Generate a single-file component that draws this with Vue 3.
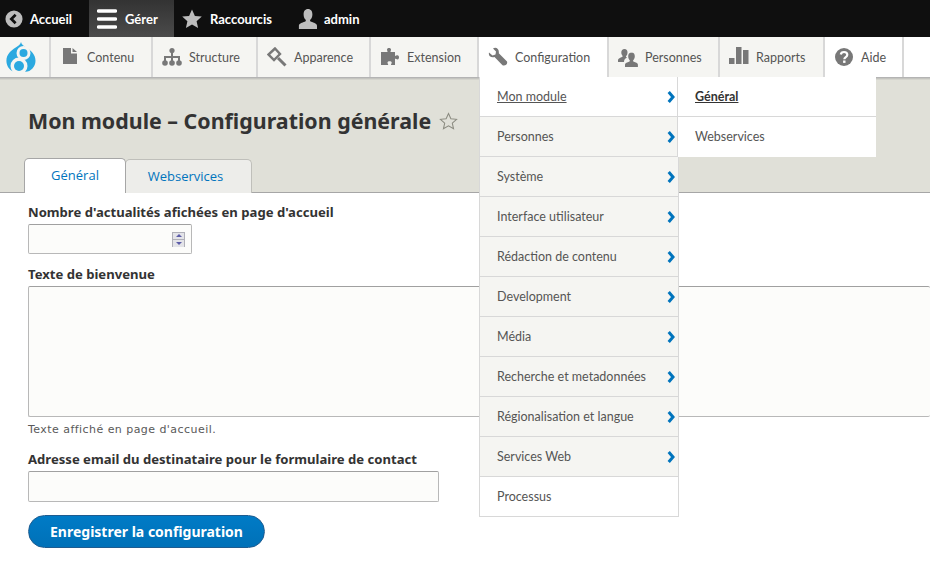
<template>
  <div class="page">
    <div class="bar">
      <a class="bar-item">
        <svg class="bar-icon" viewBox="0 0 20 20" width="18" height="18"><circle cx="10" cy="10" r="9.500" fill="#bdbdbd" /><path d="M11.800 5.200 7 10l4.800 4.800" fill="none" stroke="#0f0f0f" stroke-width="3" /></svg>
        <span>Accueil</span>
      </a>
      <a class="bar-item manage">
        <svg viewBox="0 0 20 20" width="20" height="20"><path d="M1.500 2h17M1.500 10h17M1.500 18h17" stroke="#fff" stroke-width="3.400" fill="none" stroke-linecap="round" /></svg>
        <span>Gérer</span>
      </a>
      <a class="bar-item shortcuts">
        <svg viewBox="0 0 20 20" width="20" height="20"><path d="M10 .5l2.900 6.400 6.900.7-5.200 4.600 1.500 6.800-6.100-3.500-6.100 3.500 1.500-6.800L.2 7.600l6.900-.7z" fill="#bdbdbd" /></svg>
        <span>Raccourcis</span>
      </a>
      <a class="bar-item user">
        <svg viewBox="0 0 20 20" width="20" height="20"><path d="M10 0c3 0 4.400 2.400 4.400 5.400 0 2.400-1 4.400-2.200 5.400-.4.800 0 1.600 1 2 2.400.9 5.800 1.700 5.800 4V20H.9v-3.200c0-2.300 3.400-3.100 5.800-4 1-.4 1.400-1.200 1-2C6.500 9.800 5.600 7.800 5.600 5.400 5.600 2.400 7 0 10 0z" fill="#bdbdbd" /></svg>
        <span>admin</span>
      </a>
    </div>

    <nav class="tray">
      <a class="logo">
        <svg viewBox="0 0 30 30" width="30" height="30">
          <path d="M15 0c.4 2.500 3 4 5.600 5.800 4 2.700 8.900 6.400 8.900 13 0 6-4.600 11-10 11H10C4.600 29.800.4 25 .4 18.800c0-6.600 5-10.300 8.900-13C11.900 4 14.600 2.500 15 0z" fill="#2ba9e0" />
          <circle cx="17.500" cy="11" r="7" fill="#f5f5f2" />
          <circle cx="13" cy="24" r="8.500" fill="#f5f5f2" />
          <circle cx="17.500" cy="11" r="4" fill="#2ba9e0" />
          <circle cx="13" cy="24" r="5" fill="#2ba9e0" />
        </svg>
      </a>
      <a v-for="item in trayItems" :key="item.label" class="tray-item" :class="{ active: item.active, plain: item.plain }" :style="{ width: item.width + 'px' }">
        <svg class="tray-icon" viewBox="0 0 20 20" width="20" height="20" v-html="item.icon"></svg>
        <span>{{ item.label }}</span>
      </a>
      <div class="tray-rest"></div>

      <ul class="menu">
        <li v-for="(entry, i) in menuItems" :key="entry" class="menu-row" :class="{ open: i === 0, last: i === menuItems.length - 1 }">
          <span class="menu-label">{{ entry }}</span>
          <svg v-if="i < menuItems.length - 1" class="chevron" viewBox="0 0 8 12" width="8" height="12"><path d="M1.700 1 6 6l-4.300 5" fill="none" stroke="#0074bd" stroke-width="3" /></svg>
        </li>
      </ul>
      <ul class="submenu">
        <li class="sub-row current"><span>Général</span></li>
        <li class="sub-row"><span>Webservices</span></li>
      </ul>
    </nav>

    <header class="head">
      <h1>
        Mon module – Configuration générale
        <svg viewBox="0 0 20 20" width="19" height="19"><path d="M10 1.500l2.500 5.500 6 .7-4.500 4 1.300 5.900-5.300-3-5.300 3 1.300-5.900-4.500-4 6-.7z" fill="none" stroke="#8b8b80" stroke-width="1.100" /></svg>
      </h1>
      <div class="tabs">
        <a class="tab selected">Général</a>
        <a class="tab">Webservices</a>
      </div>
    </header>

    <form class="form" @submit.prevent>
      <label class="field-label">Nombre d'actualités afichées en page d'accueil</label>
      <div class="number">
        <span class="spin">
          <i class="up"></i>
          <i class="down"></i>
        </span>
      </div>
      <label class="field-label second">Texte de bienvenue</label>
      <div class="textarea"></div>
      <p class="hint">Texte affiché en page d'accueil.</p>
      <label class="field-label third">Adresse email du destinataire pour le formulaire de contact</label>
      <div class="email"></div>
      <button class="save" type="submit">Enregistrer la configuration</button>
    </form>
  </div>
</template>

<script setup>
const trayItems = [
  { label: "Contenu", width: 102, icon: '<path d="M3 1h8v5.500h6V17H3zM12.500 1 17 5h-4.500z" fill="#787878"/>' },
  { label: "Structure", width: 105, icon: '<g fill="#787878"><circle cx="10" cy="3.500" r="2.600"/><circle cx="3" cy="16" r="2.800"/><circle cx="10" cy="16" r="2.800"/><circle cx="17" cy="16" r="2.800"/><path d="M9 5h2v4h7v6h-2v-4h-5v4H9v-4H4v4H2V9h7z"/></g>' },
  { label: "Apparence", width: 113, icon: '<g fill="none" stroke="#787878"><path d="M8 1.500 1.500 7.500 7 13l6-6z" stroke-width="2.400"/><path d="M11 11l7.500 7.500" stroke-width="3"/></g>' },
  { label: "Extension", width: 108, icon: '<path d="M7 2.500c0-2 4-2 4 0 0 1-.5 1.500-.5 2.500H15v4c1 0 1.500-.7 2.500-.7 2 0 2 4.200 0 4.200-1 0-1.500-.7-2.500-.7V18h-4c0-1 .7-1.500.7-2.500 0-1.800-4.200-1.800-4.200 0 0 1 .7 1.500.7 2.500H1V5h6.500C7.500 4 7 3.500 7 2.500z" fill="#787878"/>' },
  { label: "Configuration", width: 130, active: true, icon: '<path d="M1 5.500 4.500 8.500 7.500 7.500 8 4.500 5 1.500C8-.5 11.500 2 10.800 6.200L19 14.500c1 2.500-2 5-4.500 3.800L6.500 10C2.500 11 .2 8.500 1 5.500z" fill="#787878"/>' },
  { label: "Personnes", width: 111, icon: '<g fill="#787878"><path d="M6.500 2c2 0 3 1.500 3 3.500 0 1.500-.6 3-1.500 3.700-.3.700.5 1 1 1.300-1.500.8-3 2-3 4.500H0v-2c0-1.500 2.500-2.200 4-3 .6-.3.800-.8.500-1.300C3.800 8 3.300 6.800 3.300 5.500 3.300 3.500 4.500 2 6.500 2z"/><path d="M13.500 5.500c2.300 0 3.300 1.700 3.300 3.800 0 1.600-.7 3.200-1.600 4-.3.700 0 1.200.7 1.500 1.500.6 4 1.200 4 2.800V20H7v-2.400c0-1.600 2.500-2.200 4-2.800.7-.3 1-.8.700-1.500-.9-.8-1.500-2.400-1.500-4 0-2.100 1-3.800 3.800-3.800z"/></g>' },
  { label: "Rapports", width: 105, icon: '<path d="M0 11h5.500v6H0zM7 0h5.500v17H7zM14 3h5.500v14H14z" fill="#787878"/>' },
  { label: "Aide", width: 79, plain: true, icon: '<circle cx="10" cy="10" r="9" fill="#787878"/><path d="M6.800 7.500C7 5.800 8.300 5 10 5c1.900 0 3.300 1 3.300 2.700 0 2.300-3 2.300-3 4.500" fill="none" stroke="#fff" stroke-width="2.200"/><rect x="9.100" y="13.500" width="2.400" height="2.400" fill="#fff"/>' },
];

const menuItems = [
  "Mon module",
  "Personnes",
  "Système",
  "Interface utilisateur",
  "Rédaction de contenu",
  "Development",
  "Média",
  "Recherche et metadonnées",
  "Régionalisation et langue",
  "Services Web",
  "Processus",
];
</script>

<style>
html,
body {
  background: #fff;
}
</style>

<style scoped>
.page {
  width: 930px;
  height: 582px;
  overflow: hidden;
  font-family: "Noto Sans", sans-serif;
  color: #333;
}
.bar {
  height: 37px;
  background: #0f0f0f;
  display: flex;
  font-family: "Lato", sans-serif;
  font-size: 13px;
  font-weight: 700;
  color: #fff;
}
.bar-item {
  display: flex;
  align-items: center;
  gap: 7px;
  padding-left: 5px;
  width: 89px;
  box-sizing: border-box;
}
.manage {
  width: 85px;
  padding-left: 8px;
  gap: 8px;
  background: linear-gradient(#333, #4b4b4b);
}
.shortcuts {
  width: 116px;
  padding-left: 8px;
  gap: 8px;
}
.user {
  padding-left: 8px;
  width: 90px;
  gap: 6px;
}
.tray {
  position: relative;
  height: 40px;
  display: flex;
  background: #f5f5f2;
  box-shadow: 0 1px 0 #b4b4b4, 0 2px 0 #c4c4bf, 0 3px 0 #d4d4cd;
  z-index: 2;
  font-family: "Lato", sans-serif;
  font-size: 12.500px;
  color: #555;
}
.logo {
  width: 51px;
  display: flex;
  align-items: center;
  justify-content: center;
  padding-right: 7px;
  box-sizing: border-box;
  border-right: 2px solid #d8d8d8;
}
.tray-item {
  display: flex;
  align-items: center;
  gap: 7px;
  padding-left: 9px;
  box-sizing: border-box;
  border-right: 2px solid #d8d8d8;
}
.tray-item.active,
.tray-item.plain {
  background: #fff;
}
.tray-icon {
  flex: none;
}
.tray-rest {
  flex: 1;
  background: #fff;
}
.menu,
.submenu {
  position: absolute;
  top: 40px;
  margin: 0;
  padding: 0;
  list-style: none;
}
.menu {
  left: 479px;
  width: 200px;
  box-sizing: border-box;
  border-left: 1px solid #d8d8d8;
  border-right: 1px solid #d8d8d8;
}
.menu-row {
  height: 40px;
  box-sizing: border-box;
  border-bottom: 1px solid #d8d8d8;
  background: #f5f5f2;
  display: flex;
  align-items: center;
  justify-content: space-between;
  padding: 0 3px 1px 17px;
}
.chevron {
  margin-top: 1px;
}
.menu-row.open,
.menu-row.last {
  background: #fff;
}
.menu-row.open .menu-label {
  text-decoration: underline;
}
.submenu {
  left: 677px;
  width: 199px;
  background: #fff;
}
.sub-row {
  height: 40px;
  box-sizing: border-box;
  padding: 0 0 1px 17px;
  display: flex;
  align-items: center;
  border-left: 1px solid #d8d8d8;
}
.sub-row:first-child {
  border-bottom: 1px solid #d8d8d8;
}
.sub-row.current {
  font-weight: 700;
  text-decoration: underline;
  color: #333;
}
.head {
  height: 116px;
  background: #e0e0d8;
  box-sizing: border-box;
  border-bottom: 1px solid #a6a6a6;
  padding: 29px 0 0 28px;
  display: flex;
  flex-direction: column;
  justify-content: space-between;
}
h1 {
  margin: 0;
  font-size: 21.400px;
  line-height: 30px;
  font-weight: 700;
  color: #333;
  display: flex;
  align-items: center;
  gap: 8px;
}
.tabs {
  display: flex;
  margin-left: -4px;
  margin-bottom: -1px;
}
.tab {
  height: 34px;
  box-sizing: border-box;
  border: 1px solid #bfbfba;
  border-bottom: 0;
  border-radius: 5px 5px 0 0;
  background: #ededea;
  color: #0074bd;
  font-family: "Open Sans", sans-serif;
  font-size: 13px;
  display: flex;
  align-items: center;
  justify-content: center;
  width: 127px;
  margin-left: -1px;
  padding: 0 6px 2px 0;
}
.tab.selected {
  width: 102px;
  height: 35px;
  margin-top: -1px;
  margin-left: 0;
  padding-right: 0;
  background: #fff;
  border-color: #a6a6a6;
  z-index: 1;
}
.form {
  padding: 11px 0 0 28px;
}
.field-label {
  display: block;
  font-size: 13.100px;
  line-height: 16px;
  font-weight: 700;
  color: #333;
}
.second {
  margin-top: 12px;
}
.third {
  margin-top: 14px;
}
.number,
.textarea,
.email {
  box-sizing: border-box;
  background: #fcfcfa;
  border: 1px solid #b8b8b8;
  border-top-color: #a0a0a0;
  border-radius: 2px;
}
.number {
  width: 164px;
  height: 30px;
  margin-top: 4px;
  display: flex;
  align-items: center;
  justify-content: flex-end;
  padding-right: 6px;
}
.spin {
  width: 13px;
  height: 15px;
  display: flex;
  flex-direction: column;
  justify-content: space-between;
}
.spin i {
  height: 7px;
  background: #e4e4e8;
  border: 1px solid #b0b0b8;
  border-width: 1px 1px 0;
  display: flex;
  align-items: center;
  justify-content: center;
}
.spin i::before {
  content: "";
  border-left: 3px solid transparent;
  border-right: 3px solid transparent;
}
.spin .up::before {
  border-bottom: 3px solid #5c5ca8;
}
.spin .down::before {
  border-top: 3px solid #5c5ca8;
}
.textarea {
  width: 902px;
  height: 131px;
  margin-top: 4px;
  border-right: 0;
}
.hint {
  margin: 6px 0 0;
  font-family: "DejaVu Sans", sans-serif;
  font-size: 11px;
  line-height: 14px;
  color: #595959;
  letter-spacing: 0.45px;
}
.email {
  width: 411px;
  height: 31px;
  margin-top: 4px;
}
.save {
  display: block;
  margin-top: 13px;
  width: 237px;
  height: 33px;
  border: 1px solid #1e5c90;
  border-radius: 17px;
  background: linear-gradient(#007bc6, #0071b8);
  color: #fff;
  font-family: "Noto Sans", sans-serif;
  font-size: 14px;
  font-weight: 700;
  padding: 0;
}
</style>
